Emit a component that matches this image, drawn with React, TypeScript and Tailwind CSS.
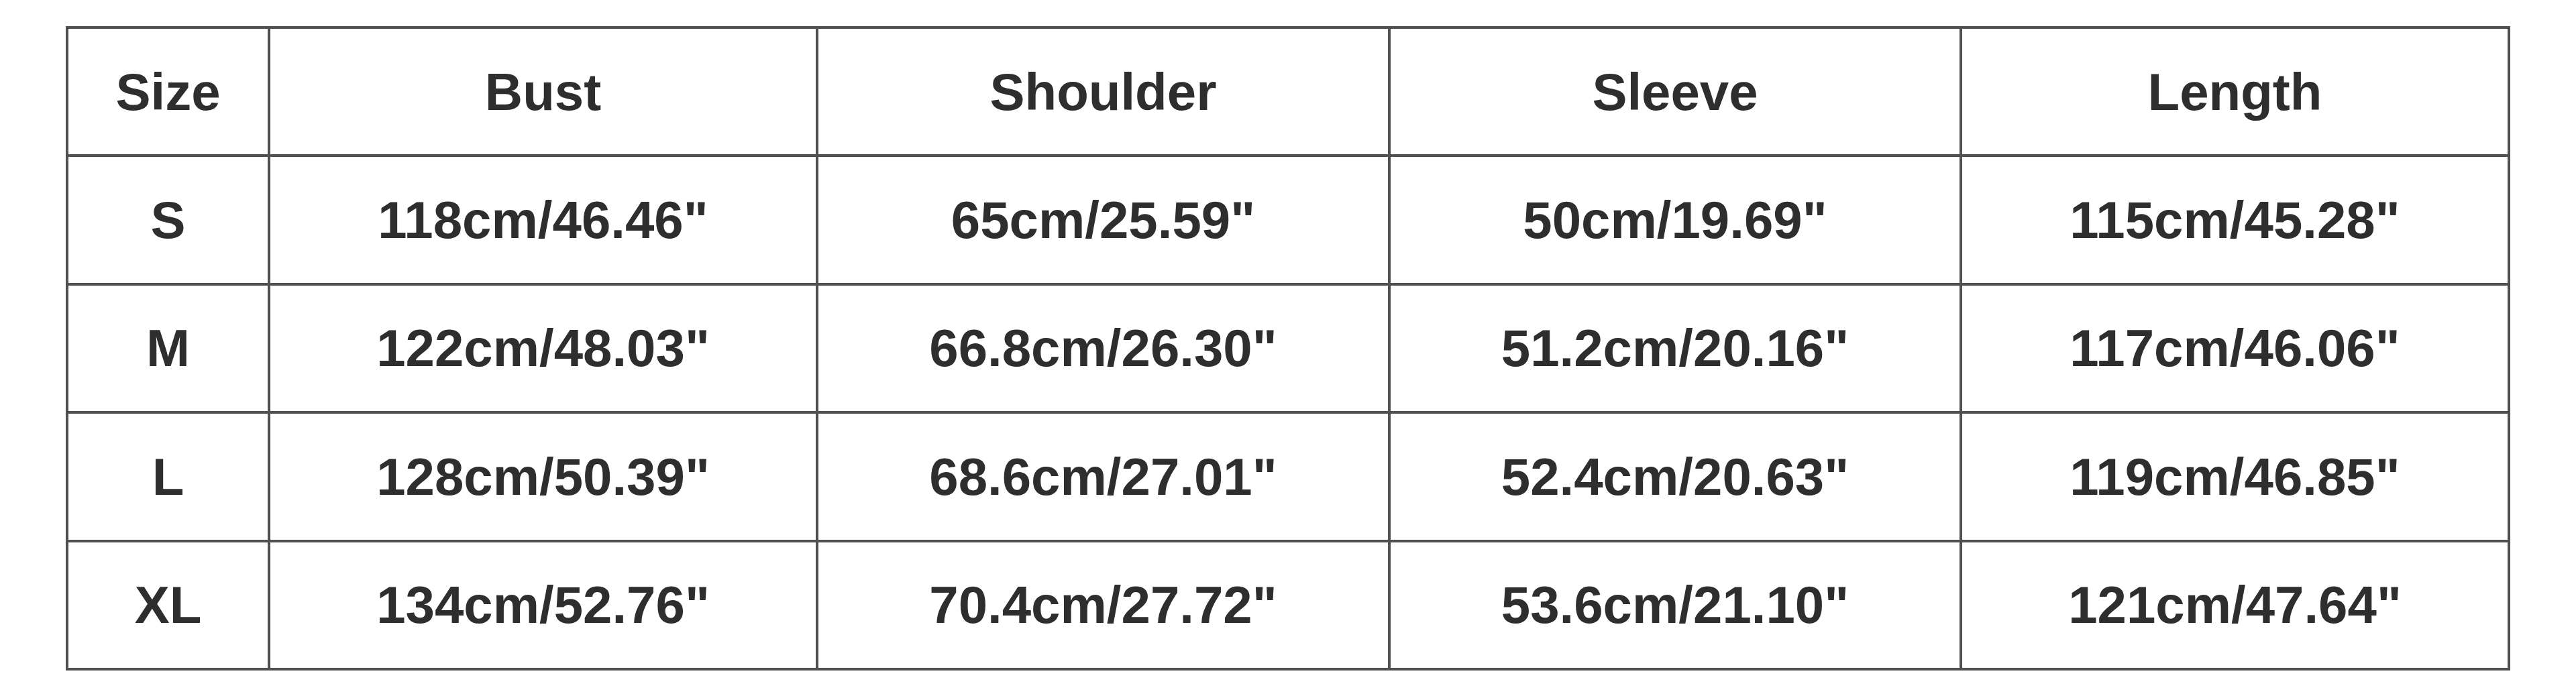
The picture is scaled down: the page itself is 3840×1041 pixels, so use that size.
const headers = ['Size', 'Bust', 'Shoulder', 'Sleeve', 'Length'];

const rows = [
    ['S', '118cm/46.46"', '65cm/25.59"', '50cm/19.69"', '115cm/45.28"'],
    ['M', '122cm/48.03"', '66.8cm/26.30"', '51.2cm/20.16"', '117cm/46.06"'],
    ['L', '128cm/50.39"', '68.6cm/27.01"', '52.4cm/20.63"', '119cm/46.85"'],
    ['XL', '134cm/52.76"', '70.4cm/27.72"', '53.6cm/21.10"', '121cm/47.64"'],
];

function Cell({ children }: { children: React.ReactNode }) {
    return (
        <div className="bg-white flex items-center justify-center text-[78px] font-bold text-[#2e2e2e] leading-none font-['Liberation_Sans',Arial,sans-serif]">
            {children}
        </div>
    );
}

export default function App() {
    return (
        <div className="w-[3840px] h-[1041px] bg-white pl-[98px] pt-[39px] font-['Liberation_Sans',Arial,sans-serif]">
            {/* size chart grid, lines come from the gap showing the bg */}
            <div className="w-[3644px] h-[961px] bg-[#505050] p-[4px] grid grid-cols-[297px_813px_849px_848px_813px] grid-rows-5 gap-[4px]">
                {headers.map((h) => (
                    <Cell key={h}>{h}</Cell>
                ))}
                {rows.map((row) =>
                    row.map((v, i) => <Cell key={row[0] + i}>{v}</Cell>)
                )}
            </div>
        </div>
    );
}
